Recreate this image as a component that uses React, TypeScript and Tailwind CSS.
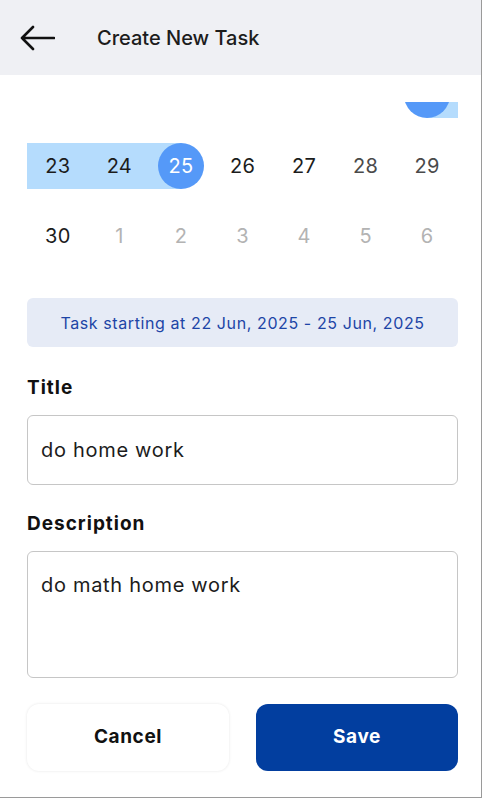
import React from "react";

type Day = { n: number; muted?: boolean; weekend?: boolean };

const prevRow: Day[] = [16, 17, 18, 19, 20, 21, 22].map((n) => ({ n }));
const rowA: Day[] = [
  { n: 23 },
  { n: 24 },
  { n: 25 },
  { n: 26 },
  { n: 27 },
  { n: 28, weekend: true },
  { n: 29, weekend: true },
];
const rowB: Day[] = [
  { n: 30 },
  { n: 1, muted: true },
  { n: 2, muted: true },
  { n: 3, muted: true },
  { n: 4, muted: true },
  { n: 5, muted: true },
  { n: 6, muted: true },
];

// range 22 -> 25 Jun
function Cell({ d, band, circle }: { d: Day; band?: "full" | "left" | "right"; circle?: boolean }) {
  return (
    <div className="relative flex h-[46px] items-center justify-center">
      {band === "full" && <div className="absolute inset-0 bg-[#b5dcfd]" />}
      {band === "left" && <div className="absolute inset-y-0 left-0 w-1/2 bg-[#b5dcfd]" />}
      {band === "right" && <div className="absolute inset-y-0 right-0 w-1/2 bg-[#b5dcfd]" />}
      {circle && <div className="absolute h-[46px] w-[46px] rounded-full bg-[#5599f8]" />}
      <span
        className={
          "relative text-[20px] tracking-[0.3px] " +
          (circle ? "text-white" : d.muted ? "text-[#b3b3b3]" : d.weekend ? "text-[#4a4a4a]" : "text-[#1c1c1c]")
        }
      >
        {d.n}
      </span>
    </div>
  );
}

export default function App() {
  return (
    <div
      className="h-[798px] w-[482px] overflow-hidden border-r border-b border-[#9a9a9a] bg-white"
      style={{ fontFamily: "Inter, 'Noto Sans', sans-serif" }}
    >
      <div className="flex h-[75px] items-center bg-[#eff0f4] pl-[20px]">
        <svg width="35" height="26" viewBox="0 0 35 26" fill="none" stroke="#111" strokeWidth="2.6" strokeLinecap="round" strokeLinejoin="round">
          <path d="M34 13H2M13 2L2 13l11 11" />
        </svg>
        <h1 className="ml-[42px] text-[20px] font-medium text-[#1c1c1c]">Create New Task</h1>
      </div>

      <div className="pl-[27px] pr-[23px]">
        <div className="mt-[27px] h-[16px] overflow-hidden">
          <div className="-mt-[30px] grid grid-cols-7">
            {prevRow.map((d, i) => (
              <Cell key={d.n} d={d} band={i === 6 ? "right" : undefined} circle={i === 6} />
            ))}
          </div>
        </div>

        <div className="mt-[25px] grid grid-cols-7">
          {rowA.map((d, i) => (
            <Cell
              key={d.n}
              d={d}
              band={i < 2 ? "full" : i === 2 ? "left" : undefined}
              circle={i === 2}
            />
          ))}
        </div>
        <div className="mt-[24px] grid grid-cols-7">
          {rowB.map((d) => (
            <Cell key={d.n} d={d} />
          ))}
        </div>

        <div className="mt-[39px] flex h-[49px] items-center justify-center rounded-[6px] bg-[#e6ebf6] text-[16px] tracking-[0.6px] text-[#1d45a6]">
          Task starting at 22 Jun, 2025 - 25 Jun, 2025
        </div>

        <label className="mt-[29px] block text-[19px] leading-[24px] font-bold tracking-[1px] text-[#111]">Title</label>
        <div className="mt-[15px] flex h-[70px] items-center rounded-[6px] border border-[#c6c6c6] px-[13px] text-[20px] tracking-[0.7px] text-[#1c1c1c]">
          do home work
        </div>

        <label className="mt-[27px] block text-[19px] leading-[24px] font-bold tracking-[1px] text-[#111]">Description</label>
        <div className="mt-[15px] h-[127px] rounded-[6px] border border-[#c6c6c6] px-[13px] pt-[21px] text-[20px] leading-[24px] tracking-[0.7px] text-[#1c1c1c]">
          do math home work
        </div>

        <div className="mt-[26px] flex gap-[27px]">
          <button className="flex h-[67px] flex-1 items-center justify-center rounded-[12px] bg-white text-[19px] font-bold tracking-[0.6px] text-[#111] shadow-[0_0_3px_rgba(0,0,0,0.1)]">
            Cancel
          </button>
          <button className="flex h-[67px] flex-1 items-center justify-center rounded-[12px] bg-[#023e9f] text-[19px] font-bold tracking-[0.6px] text-white">
            Save
          </button>
        </div>
      </div>
    </div>
  );
}
